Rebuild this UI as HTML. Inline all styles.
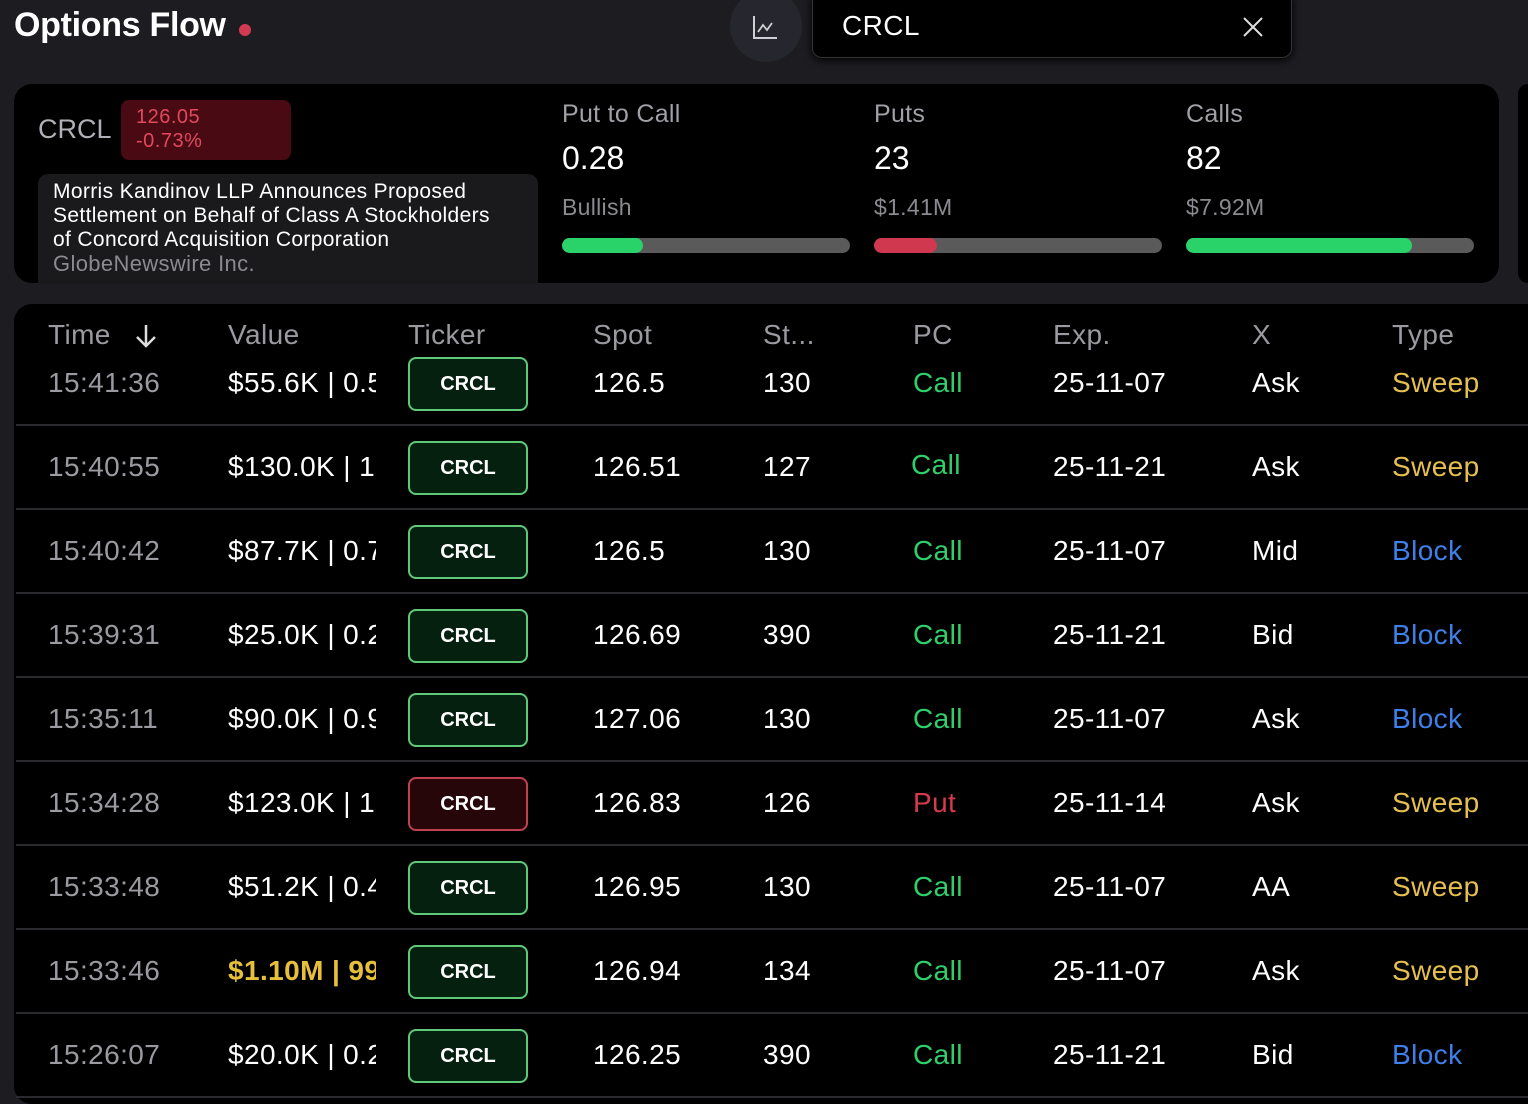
<!DOCTYPE html>
<html><head><meta charset="utf-8"><style>
*{margin:0;padding:0;box-sizing:border-box}
body{width:1528px;height:1088px;background:#1c1c21;font-family:"Liberation Sans",sans-serif;color:#fff;position:relative;overflow:hidden}
.a{position:absolute;white-space:nowrap}
.panel{position:absolute;background:#000;border-radius:18px}
.row{position:absolute;left:16px;width:1530px;height:84px;border-bottom:2px solid #2a2a2e}
.row .c{position:absolute;top:0;line-height:82px;font-size:28px;letter-spacing:0.4px;white-space:nowrap}
.t{left:32px;color:#9a9aa0}
.v{left:212px;width:148px;overflow:hidden}
.bd{position:absolute;left:392px;top:15px;width:120px;height:54px;border:2px solid #5fc97a;background:#06200f;border-radius:8px;text-align:center;line-height:50px;font-size:20px;font-weight:bold}
.bd.r{border-color:#c0414f;background:#260609}
.s{left:577px}.k{left:747px}.p{left:897px;color:#2fd06a}.p.r{color:#d63a4c}.e{left:1037px}.x{left:1236px}.y{left:1376px}
.sw{color:#e6c04e}.bl{color:#3f7fe8}
.h{position:absolute;top:319px;font-size:28px;letter-spacing:0.4px;color:#9a9aa0}
.bar{position:absolute;top:238px;height:15px;width:288px;border-radius:8px;background:#5a5a5a;overflow:hidden}
.bar i{display:block;height:100%;border-radius:8px}
.lab{font-size:25px;letter-spacing:0.3px;color:#a0a0a6;top:100px}
.big{font-size:32px;top:140px}
.sub{font-size:23px;letter-spacing:0.3px;color:#8a8a90;top:194px}
</style></head><body>
<div class="a" style="left:14px;top:6px;font-size:34px;font-weight:bold;letter-spacing:-0.3px">Options Flow</div>
<div class="a" style="left:239px;top:24px;width:12px;height:12px;border-radius:50%;background:#d33a52"></div>
<div class="a" style="left:730px;top:-10px;width:72px;height:72px;border-radius:50%;background:#26262e">
<svg width="72" height="72" viewBox="0 0 72 72"><path d="M24 26V48H47" stroke="#cfcfd4" stroke-width="2" fill="none"/><path d="M28 42L33 35L37 40L42 33" stroke="#cfcfd4" stroke-width="1.8" fill="none"/></svg></div>
<div class="a" style="left:812px;top:-10px;width:480px;height:68px;background:#000;border:1px solid #333;border-radius:10px;box-shadow:0 2px 8px #000"></div>
<div class="a" style="left:842px;top:10px;font-size:28px;letter-spacing:0.4px">CRCL</div>
<svg class="a" style="left:1242px;top:16px" width="22" height="22"><path d="M2 2L20 20M20 2L2 20" stroke="#ddd" stroke-width="2"/></svg>

<div class="panel" style="left:14px;top:84px;width:1485px;height:199px"></div>
<div class="a" style="left:1518px;top:84px;width:20px;height:199px;border-radius:18px;background:#000"></div>
<div class="a" style="left:38px;top:114px;font-size:27px;color:#b0b0b6">CRCL</div>
<div class="a" style="left:121px;top:100px;width:170px;height:60px;background:#4a0a13;border-radius:8px"></div>
<div class="a" style="left:136px;top:105px;font-size:20px;line-height:24px;letter-spacing:0.5px;color:#e0485e">126.05<br>-0.73%</div>
<div class="a" style="left:38px;top:174px;width:500px;height:110px;background:#1a1a1c;border-radius:10px 10px 0 0"></div>
<div class="a" style="left:53px;top:180px;font-size:21px;line-height:24px;letter-spacing:0.35px;color:#fff">Morris Kandinov LLP Announces Proposed<br>Settlement on Behalf of Class A Stockholders<br>of Concord Acquisition Corporation<br><span style="color:#8a8a90;font-size:22px">GlobeNewswire Inc.</span></div>

<div class="a lab" style="left:562px">Put to Call</div>
<div class="a big" style="left:562px">0.28</div>
<div class="a sub" style="left:562px">Bullish</div>
<div class="bar" style="left:562px"><i style="width:81px;background:#2ad26a"></i></div>
<div class="a lab" style="left:874px">Puts</div>
<div class="a big" style="left:874px">23</div>
<div class="a sub" style="left:874px">$1.41M</div>
<div class="bar" style="left:874px"><i style="width:63px;background:#d0384f"></i></div>
<div class="a lab" style="left:1186px">Calls</div>
<div class="a big" style="left:1186px">82</div>
<div class="a sub" style="left:1186px">$7.92M</div>
<div class="bar" style="left:1186px"><i style="width:226px;background:#2ad26a"></i></div>

<div class="panel" style="left:14px;top:304px;width:1540px;height:800px"></div>
<div class="h" style="left:48px">Time</div>
<svg class="a" style="left:134px;top:323px" width="24" height="26"><path d="M12 2V23M3 14L12 23L21 14" stroke="#ddd" stroke-width="2.5" fill="none"/></svg>
<div class="h" style="left:228px">Value</div><div class="h" style="left:408px">Ticker</div><div class="h" style="left:593px">Spot</div><div class="h" style="left:763px">St...</div><div class="h" style="left:913px">PC</div><div class="h" style="left:1053px">Exp.</div><div class="h" style="left:1252px">X</div><div class="h" style="left:1392px">Type</div>

<div class="row" style="top:342px"><div class="c t">15:41:36</div><div class="c v">$55.6K | 0.50</div><div class="bd">CRCL</div><div class="c s">126.5</div><div class="c k">130</div><div class="c p">Call</div><div class="c e">25-11-07</div><div class="c x">Ask</div><div class="c y sw">Sweep</div></div>
<div class="row" style="top:426px"><div class="c t">15:40:55</div><div class="c v">$130.0K | 1.30</div><div class="bd">CRCL</div><div class="c s">126.51</div><div class="c k">127</div><div class="c p" style="left:895px;top:-2px">Call</div><div class="c e">25-11-21</div><div class="c x">Ask</div><div class="c y sw">Sweep</div></div>
<div class="row" style="top:510px"><div class="c t">15:40:42</div><div class="c v">$87.7K | 0.70</div><div class="bd">CRCL</div><div class="c s">126.5</div><div class="c k">130</div><div class="c p">Call</div><div class="c e">25-11-07</div><div class="c x">Mid</div><div class="c y bl">Block</div></div>
<div class="row" style="top:594px"><div class="c t">15:39:31</div><div class="c v">$25.0K | 0.20</div><div class="bd">CRCL</div><div class="c s">126.69</div><div class="c k">390</div><div class="c p">Call</div><div class="c e">25-11-21</div><div class="c x">Bid</div><div class="c y bl">Block</div></div>
<div class="row" style="top:678px"><div class="c t">15:35:11</div><div class="c v">$90.0K | 0.90</div><div class="bd">CRCL</div><div class="c s">127.06</div><div class="c k">130</div><div class="c p">Call</div><div class="c e">25-11-07</div><div class="c x">Ask</div><div class="c y bl">Block</div></div>
<div class="row" style="top:762px"><div class="c t">15:34:28</div><div class="c v">$123.0K | 1.20</div><div class="bd r">CRCL</div><div class="c s">126.83</div><div class="c k">126</div><div class="c p r">Put</div><div class="c e">25-11-14</div><div class="c x">Ask</div><div class="c y sw">Sweep</div></div>
<div class="row" style="top:846px"><div class="c t">15:33:48</div><div class="c v">$51.2K | 0.40</div><div class="bd">CRCL</div><div class="c s">126.95</div><div class="c k">130</div><div class="c p">Call</div><div class="c e">25-11-07</div><div class="c x">AA</div><div class="c y sw">Sweep</div></div>
<div class="row" style="top:930px"><div class="c t">15:33:46</div><div class="c v" style="color:#e6c03a;font-weight:bold">$1.10M | 99</div><div class="bd">CRCL</div><div class="c s">126.94</div><div class="c k">134</div><div class="c p">Call</div><div class="c e">25-11-07</div><div class="c x">Ask</div><div class="c y sw">Sweep</div></div>
<div class="row" style="top:1014px"><div class="c t">15:26:07</div><div class="c v">$20.0K | 0.20</div><div class="bd">CRCL</div><div class="c s">126.25</div><div class="c k">390</div><div class="c p">Call</div><div class="c e">25-11-21</div><div class="c x">Bid</div><div class="c y bl">Block</div></div>
</body></html>
